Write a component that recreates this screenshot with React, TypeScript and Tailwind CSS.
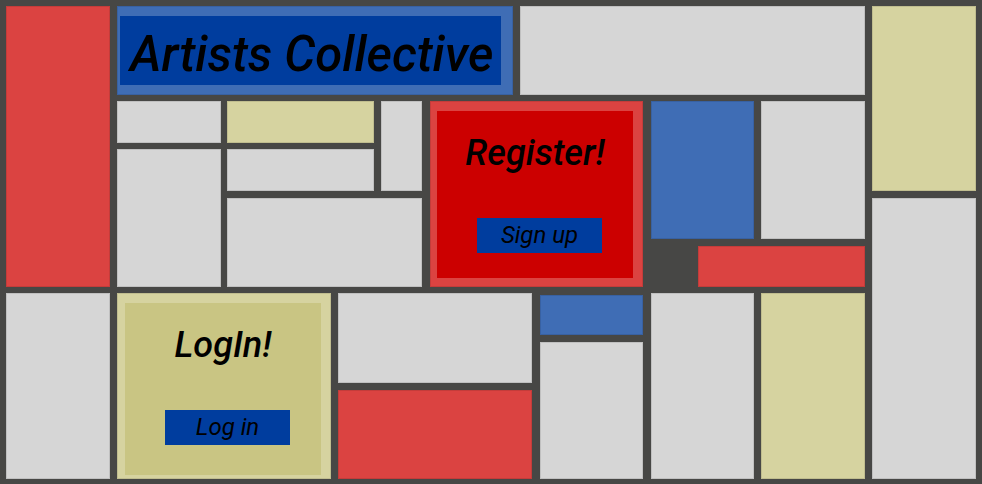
import React from 'react';

const font = { fontFamily: 'Roboto, "Noto Sans", sans-serif' };

function Cell({ className = '' }: { className?: string }) {
  return <div className={`border border-black/10 ${className}`} />;
}

function CallCard({
  title,
  action,
  outer,
  inner,
  pad,
}: {
  title: string;
  action: string;
  outer: string;
  inner: string;
  pad: string;
}) {
  return (
    <div className={`h-full border border-black/10 ${outer} ${pad}`}>
      <div className={`h-full flex flex-col items-center ${inner}`}>
        <h2 className="mt-[21px] text-[36px] leading-[42px] italic font-medium text-black">{title}</h2>
        <button className="mt-[44px] ml-[9px] w-[125px] h-[35px] bg-[#003d9e] text-[24px] leading-[35px] italic text-black">
          {action}
        </button>
      </div>
    </div>
  );
}

export default function App() {
  return (
    <div className="w-[982px] h-[484px] bg-[#474745] p-[6px] flex gap-[7px] overflow-hidden" style={font}>
      {/* main area */}
      <div className="w-[859px] h-[473px] flex flex-col gap-[6px]">
        <div className="h-[281px] flex gap-[7px]">
          <Cell className="w-[104px] bg-[#db4341]" />
          <div className="flex-1 flex flex-col gap-[6px]">
            <div className="h-[89px] flex gap-[7px]">
              <div className="w-[396px] bg-[#3f6db5] border border-black/10 pl-[2px] pr-[11px] pt-[9px] pb-[9px]">
                <h1 className="h-full overflow-hidden bg-[#003d9e] pl-[10px] pt-[4px] text-[49px] leading-[69px] italic font-medium text-black whitespace-nowrap">
                  Artists Collective
                </h1>
              </div>
              <Cell className="flex-1 bg-[#d6d6d6]" />
            </div>
            <div className="h-[186px] flex gap-[8px]">
              <div className="w-[305px] flex gap-[6px]">
                <div className="w-[104px] flex flex-col gap-[6px]">
                  <Cell className="h-[42px] bg-[#d6d6d6]" />
                  <Cell className="flex-1 bg-[#d6d6d6]" />
                </div>
                <div className="w-[195px] flex flex-col gap-[7px]">
                  <div className="h-[90px] flex gap-[7px]">
                    <div className="w-[147px] flex flex-col gap-[6px]">
                      <Cell className="h-[42px] bg-[#d6d3a0]" />
                      <Cell className="flex-1 bg-[#d6d6d6]" />
                    </div>
                    <Cell className="flex-1 bg-[#d6d6d6]" />
                  </div>
                  <Cell className="flex-1 bg-[#d6d6d6]" />
                </div>
              </div>
              <div className="w-[213px]">
                <CallCard
                  title="Register!"
                  action="Sign up"
                  outer="bg-[#db4341]"
                  inner="bg-[#cc0000]"
                  pad="pl-[6px] pr-[9px] pt-[9px] pb-[8px]"
                />
              </div>
              <div className="w-[214px] flex flex-col gap-[7px]">
                <div className="h-[138px] flex gap-[7px]">
                  <Cell className="w-[103px] bg-[#3f6db5]" />
                  <Cell className="flex-1 bg-[#d6d6d6]" />
                </div>
                <div className="flex-1 flex justify-end">
                  <Cell className="w-[167px] bg-[#db4341]" />
                </div>
              </div>
            </div>
          </div>
        </div>
        <div className="h-[186px] flex">
          <Cell className="w-[104px] bg-[#d6d6d6]" />
          <div className="w-[214px] ml-[7px]">
            <CallCard
              title="LogIn!"
              action="Log in"
              outer="bg-[#d6d3a0]"
              inner="bg-[#c9c583]"
              pad="pl-[7px] pr-[9px] pt-[9px] pb-[3px]"
            />
          </div>
          <div className="w-[194px] ml-[7px] flex flex-col gap-[7px]">
            <Cell className="h-[90px] bg-[#d6d6d6]" />
            <Cell className="flex-1 bg-[#db4341]" />
          </div>
          <div className="w-[103px] ml-[8px] flex flex-col gap-[7px]">
            <Cell className="mt-[2px] h-[40px] bg-[#3f6db5]" />
            <Cell className="flex-1 bg-[#d6d6d6]" />
          </div>
          <Cell className="w-[103px] ml-[8px] bg-[#d6d6d6]" />
          <Cell className="w-[104px] ml-[7px] bg-[#d6d3a0]" />
        </div>
      </div>
      {/* right column */}
      <div className="w-[104px] h-[473px] flex flex-col gap-[7px]">
        <Cell className="h-[185px] bg-[#d6d3a0]" />
        <Cell className="flex-1 bg-[#d6d6d6]" />
      </div>
    </div>
  );
}
